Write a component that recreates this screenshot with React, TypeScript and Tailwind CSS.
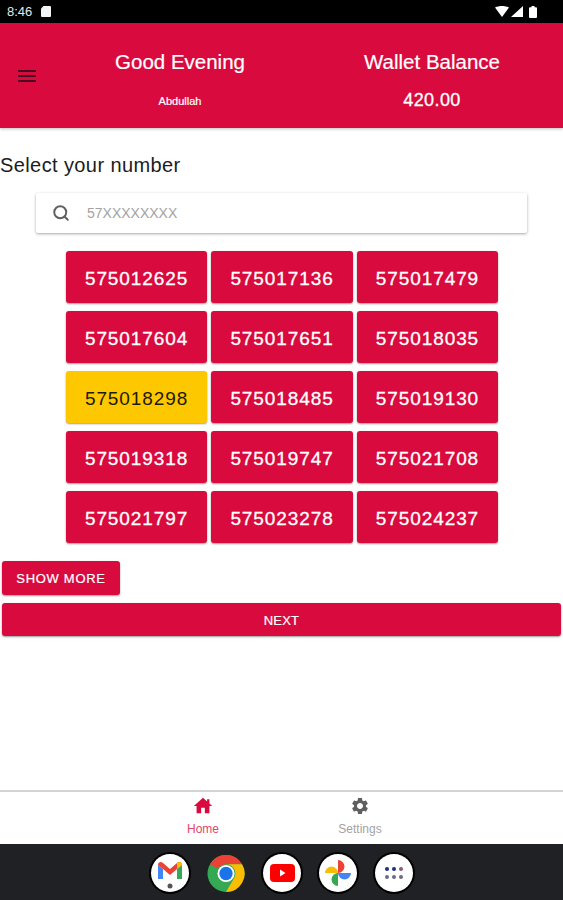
import { Search } from "lucide-react";
import { MdSettings } from "react-icons/md";

const NUMBERS = [
  "575012625", "575017136", "575017479",
  "575017604", "575017651", "575018035",
  "575018298", "575018485", "575019130",
  "575019318", "575019747", "575021708",
  "575021797", "575023278", "575024237",
];

function StatusBar() {
  return (
    <div className="flex h-[23px] items-center justify-between bg-black pl-[7px] pr-[26px] text-white">
      <div className="flex items-center gap-[9px]">
        <span className="text-[13px] font-medium leading-none text-gray-200">8:46</span>
        <svg width="10" height="11" viewBox="0 0 10 11" className="fill-gray-100">
          <path d="M2.5 0H9a1 1 0 0 1 1 1v9a1 1 0 0 1-1 1H1a1 1 0 0 1-1-1V2.500z" />
        </svg>
      </div>
      <div className="flex items-center gap-[2px]">
        <svg width="14" height="11" viewBox="0 0 14 11" className="fill-white">
          <path d="M0 1.500C4.300 -.5 9.700 -.5 14 1.500L7 11z" />
        </svg>
        <svg width="12" height="11" viewBox="0 0 12 11" className="fill-white">
          <path d="M12 0v11H0z" />
        </svg>
        <svg width="8" height="12" viewBox="0 0 8 12" className="ml-[4px] fill-white">
          <path d="M2.500 0h3v1.200H7a1 1 0 0 1 1 1V11a1 1 0 0 1-1 1H1a1 1 0 0 1-1-1V2.200a1 1 0 0 1 1-1h1.500z" />
        </svg>
      </div>
    </div>
  );
}

function AppHeader() {
  return (
    <header className="relative flex h-[105px] bg-[#d80a3e] text-white shadow-[0_1px_3px_rgba(0,0,0,0.25)]">
      <div className="flex w-[54px] items-center justify-center">
        <svg width="18" height="12" viewBox="0 0 18 12" className="stroke-[#4a0a22]" strokeWidth="2">
          <path d="M0 1h18M0 6h18M0 11h18" />
        </svg>
      </div>
      <div className="flex w-[252px] flex-col items-center">
        <p className="mt-[25px] text-[20.500px] leading-[28px] [-webkit-text-stroke:0.2px_white]">Good Evening</p>
        <p className="mt-[18px] text-[11px] leading-[14px] [-webkit-text-stroke:0.2px_white]">Abdullah</p>
      </div>
      <div className="flex flex-1 flex-col items-center pr-[5px]">
        <p className="mt-[25px] text-[20.500px] leading-[28px] [-webkit-text-stroke:0.2px_white]">Wallet Balance</p>
        <p className="mt-[13px] text-[18px] leading-[22px] tracking-[0.4px] [-webkit-text-stroke:0.3px_white]">420.00</p>
      </div>
    </header>
  );
}

function SearchBox() {
  return (
    <div className="mx-[36px] mt-[16px] flex h-[40px] items-center rounded-[2px] bg-white shadow-[0_1px_3px_rgba(0,0,0,0.35)]">
      <Search size={18} strokeWidth={2.6} className="ml-[16px] text-[#5f5f5f]" />
      <span className="ml-[17px] text-[14px] text-[#a3a3a3]">57XXXXXXXX</span>
    </div>
  );
}

function NumberGrid() {
  return (
    <div className="ml-[66px] mt-[18px] grid w-[432px] grid-cols-3 gap-x-[4.400px] gap-y-[8px]">
      {NUMBERS.map((n) => (
        <button
          key={n}
          className={
            n === "575018298"
              ? "h-[52px] rounded-[3px] bg-[#fdc800] pt-[4px] text-[19px] tracking-[0.9px] text-[#1f1a00] shadow-[0_1px_2px_rgba(0,0,0,0.4)]"
              : "h-[52px] rounded-[3px] bg-[#d80a3e] pt-[4px] text-[19px] tracking-[0.9px] text-white shadow-[0_1px_2px_rgba(0,0,0,0.4)] [-webkit-text-stroke:0.3px_white]"
          }
        >
          {n}
        </button>
      ))}
    </div>
  );
}

function TabBar() {
  return (
    <nav className="flex h-[54px] justify-center border-t-2 border-[#d4d4d4] bg-white">
      <div className="flex w-[157px] flex-col items-center pt-[3px]">
        <div className="flex h-[22px] items-center">
          <svg width="22" height="22" viewBox="0 0 24 24" className="fill-[#d80a3e]">
            <path d="M10 20v-6h4v6h5v-8h3l-3-2.700V4.500h-2.500v2.600L12 3 2 12h3v8z" />
          </svg>
        </div>
        <span className="mt-[5px] text-[12px] leading-[14px] text-[#e0466c]">Home</span>
      </div>
      <div className="flex w-[157px] flex-col items-center pt-[3px]">
        <div className="flex h-[22px] items-center text-[#5f5f5f]">
          <MdSettings size={20} />
        </div>
        <span className="mt-[5px] text-[12px] leading-[14px] text-[#a3a3a3]">Settings</span>
      </div>
    </nav>
  );
}

function GmailIcon() {
  return (
    <svg width="26" height="30" viewBox="0 0 26 30" className="mt-[3px]">
      <path d="M1 5v14h5V9z" fill="#4285f4" />
      <path d="M25 5v14h-5V9z" fill="#34a853" />
      <path d="M1 5c0-3 3-4 5-2l7 6 7-6c2-2 5-1 5 2l-5 4-7 6-7-6z" fill="#ea4335" />
      <path d="M20 3c2-2 5-1 5 2l-5 4z" fill="#fbbc04" />
      <circle cx="13" cy="26" r="2.500" fill="#555555" />
    </svg>
  );
}

function ChromeIcon() {
  return (
    <svg width="39" height="39" viewBox="0 0 40 40">
      <circle cx="20" cy="20" r="19.500" fill="#34a853" />
      <path d="M3.100 10.200A19.500 19.500 0 0 1 36.900 10.200H20A9.800 9.800 0 0 0 11.500 15.100z" fill="#ea4335" />
      <path d="M36.900 10.200A19.500 19.500 0 0 1 20 39.500L28.500 24.900A9.800 9.800 0 0 0 20 10.200z" fill="#fbbc04" />
      <circle cx="20" cy="20" r="9" fill="#ffffff" />
      <circle cx="20" cy="20" r="7" fill="#1a73e8" />
    </svg>
  );
}

function YoutubeIcon() {
  return (
    <svg width="25" height="18" viewBox="0 0 25 18">
      <rect width="25" height="18" rx="4" fill="#ff0000" />
      <path d="M10 5.500v7l5.500-3.500z" fill="#ffffff" />
    </svg>
  );
}

function PhotosIcon() {
  return (
    <svg width="28" height="28" viewBox="0 0 28 28">
      <path d="M14 14H1a6.500 6.500 0 0 1 13 0z" fill="#fbbc04" />
      <path d="M14 14V1a6.500 6.500 0 0 1 0 13z" fill="#ea4335" />
      <path d="M14 14h13a6.500 6.500 0 0 1-13 0z" fill="#4285f4" />
      <path d="M14 14v13a6.500 6.500 0 0 1 0-13z" fill="#34a853" />
    </svg>
  );
}

function AppsIcon() {
  const dots = ["#1a2f7f", "#1a2f7f", "#8a5a80", "#6b6b85", "#6b6b85", "#6b6b85"];
  return (
    <div className="grid grid-cols-3 gap-x-[3px] gap-y-[4px]">
      {dots.map((c, i) => (
        <span key={i} className="h-[4px] w-[4px] rounded-full" style={{ backgroundColor: c }} />
      ))}
    </div>
  );
}

function Dock() {
  const circle = "flex h-[38px] w-[38px] items-center justify-center rounded-full bg-white ring-2 ring-black";
  return (
    <div className="flex h-[56px] items-center justify-center gap-[18px] bg-[#202124] pl-[1px] pt-[2px]">
      <div className={circle}><GmailIcon /></div>
      <div className="flex h-[38px] w-[38px] items-center justify-center rounded-full"><ChromeIcon /></div>
      <div className={circle}><YoutubeIcon /></div>
      <div className={circle}><PhotosIcon /></div>
      <div className={circle}><AppsIcon /></div>
    </div>
  );
}

export default function App() {
  return (
    <div className="flex h-[900px] w-[563px] flex-col overflow-hidden bg-white font-['Liberation_Sans',Arial,sans-serif]">
      <StatusBar />
      <AppHeader />
      <main className="flex-1">
        <h2 className="mt-[25px] text-[20px] leading-[24px] tracking-[0.4px] text-[#1c1c1c]">Select your number</h2>
        <SearchBox />
        <NumberGrid />
        <div className="mt-[18px] px-[2px]">
          <button className="h-[34px] w-[118px] rounded-[3px] bg-[#d80a3e] pt-[2px] text-[13px] tracking-[0.7px] text-white shadow-[0_1px_2px_rgba(0,0,0,0.4)] [-webkit-text-stroke:0.2px_white]">
            SHOW MORE
          </button>
          <button className="mt-[8px] block h-[33px] w-full rounded-[3px] bg-[#d80a3e] pt-[2px] text-[13px] tracking-[0.2px] text-white shadow-[0_1px_2px_rgba(0,0,0,0.4)] [-webkit-text-stroke:0.2px_white]">
            NEXT
          </button>
        </div>
      </main>
      <TabBar />
      <Dock />
    </div>
  );
}
